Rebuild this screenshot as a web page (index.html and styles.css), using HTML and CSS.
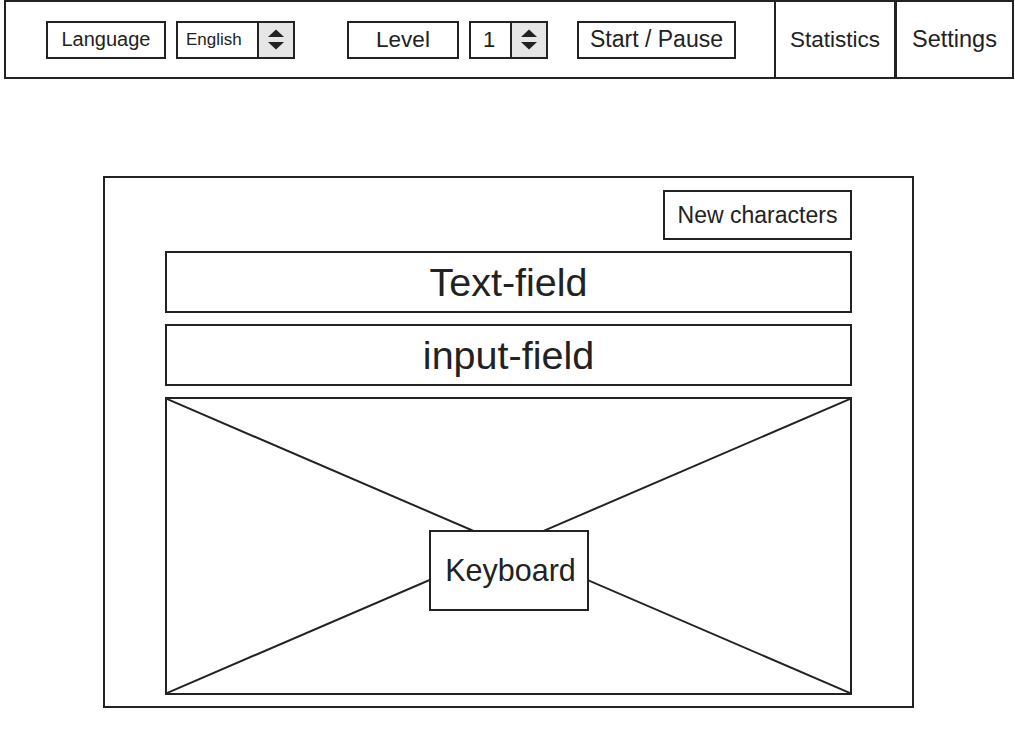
FILE: index.html
```html
<!DOCTYPE html>
<html>
<head>
<meta charset="utf-8">
<link rel="stylesheet" href="styles.css">
</head>
<body>
<header class="topbar">
  <div class="controls">
    <div class="btn btn-lang">Language</div>
    <div class="select select-lang">
      <span class="select-value">English</span>
      <span class="spin"><svg width="18" height="22" viewBox="0 0 18 22"><path d="M1 8 L9 0.5 L17 8 Z" fill="#222"/><path d="M1 13 L9 20.5 L17 13 Z" fill="#222"/></svg></span>
    </div>
    <div class="btn btn-level">Level</div>
    <div class="select select-level">
      <span class="select-value num">1</span>
      <span class="spin"><svg width="18" height="22" viewBox="0 0 18 22"><path d="M1 8 L9 0.5 L17 8 Z" fill="#222"/><path d="M1 13 L9 20.5 L17 13 Z" fill="#222"/></svg></span>
    </div>
    <div class="btn btn-start">Start / Pause</div>
  </div>
  <div class="tab tab-stats">Statistics</div>
  <div class="tab tab-settings">Settings</div>
</header>

<main class="panel">
  <div class="panel-top">
    <div class="btn btn-new">New characters</div>
  </div>
  <div class="field">Text-field</div>
  <div class="field">input-field</div>
  <div class="keyboard">
    <svg class="kb-cross" viewBox="0 0 100 100" preserveAspectRatio="none">
      <line x1="0" y1="0" x2="100" y2="100" vector-effect="non-scaling-stroke"/>
      <line x1="100" y1="0" x2="0" y2="100" vector-effect="non-scaling-stroke"/>
    </svg>
    <div class="kb-label">Keyboard</div>
  </div>
</main>
</body>
</html>
```

FILE: styles.css
```css
* { box-sizing: border-box; }

html, body {
  margin: 0;
  padding: 0;
  background: #fff;
}

body {
  font-family: "Liberation Sans", Arial, sans-serif;
  color: #222;
}

.topbar {
  margin-left: 4px;
  width: 1010px;
  height: 79px;
  border: 2px solid #222;
  display: flex;
  align-items: stretch;
}

.controls {
  flex: 1;
  display: flex;
  align-items: center;
  padding-left: 40px;
}

.btn {
  height: 38px;
  border: 2px solid #222;
  display: flex;
  align-items: center;
  justify-content: center;
  background: #fff;
  white-space: nowrap;
}

.btn-lang {
  width: 120px;
  font-size: 20px;
}

.btn-level {
  width: 112px;
  font-size: 22.5px;
  margin-left: 52px;
}

.btn-start {
  width: 159px;
  font-size: 23px;
  margin-left: 29px;
}

.select {
  height: 38px;
  border: 2px solid #222;
  display: flex;
  align-items: stretch;
  margin-left: 10px;
}

.select-lang { width: 119px; }
.select-level { width: 79px; }

.select-value {
  flex: 1;
  display: flex;
  align-items: center;
  padding-left: 8px;
  font-size: 17px;
}

.select-value.num {
  padding-left: 12px;
  font-size: 22px;
}

.spin {
  width: 36px;
  background: #e6e6e6;
  border-left: 2px solid #222;
  display: flex;
  align-items: center;
  justify-content: center;
}

.tab {
  display: flex;
  align-items: center;
  justify-content: center;
  white-space: nowrap;
}

.tab-stats {
  width: 120px;
  border-left: 2px solid #222;
  font-size: 22.5px;
}

.tab-settings {
  width: 118px;
  border-left: 3px solid #222;
  font-size: 23.5px;
}

.panel {
  margin: 97px 0 0 103px;
  width: 811px;
  height: 532px;
  border: 2px solid #222;
  padding: 12px 60px 11px;
  display: flex;
  flex-direction: column;
  gap: 11px;
}

.panel-top {
  display: flex;
  justify-content: flex-end;
}

.btn-new {
  width: 189px;
  height: 50px;
  font-size: 23px;
}

.field {
  height: 62px;
  border: 2px solid #222;
  display: flex;
  align-items: center;
  justify-content: center;
  font-size: 39.5px;
}

.keyboard {
  position: relative;
  flex: 1;
  border: 2px solid #222;
  display: flex;
  justify-content: center;
  align-items: flex-start;
}

.kb-cross {
  position: absolute;
  left: 0;
  top: 0;
  width: 100%;
  height: 100%;
}

.kb-cross line {
  stroke: #222;
  stroke-width: 2px;
}

.kb-label {
  position: relative;
  margin-top: 131px;
  width: 160px;
  height: 81px;
  border: 2px solid #222;
  background: #fff;
  display: flex;
  align-items: center;
  justify-content: center;
  padding-left: 4px;
  font-size: 30.5px;
}
```
